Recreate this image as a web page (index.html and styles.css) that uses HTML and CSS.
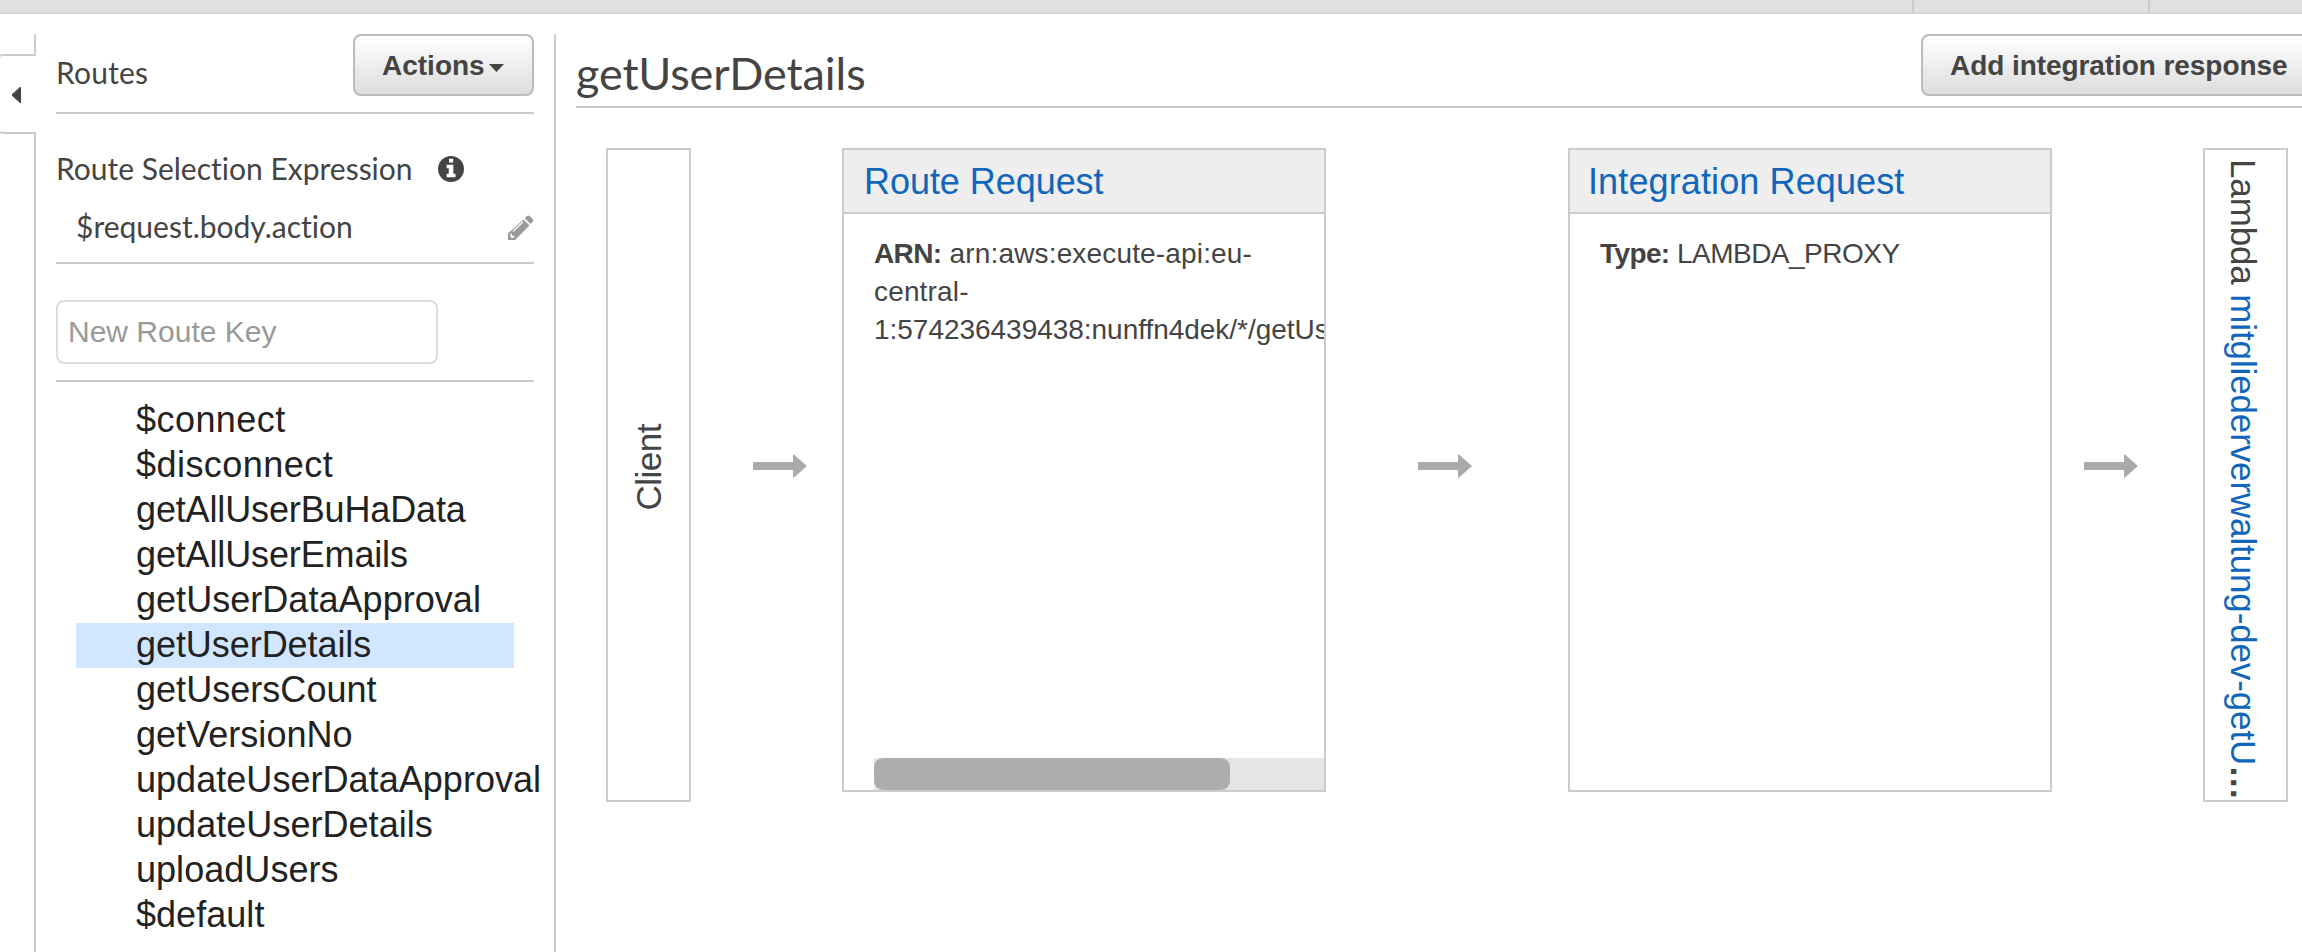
FILE: index.html
```html
<!DOCTYPE html>
<html lang="en">
<head>
<meta charset="utf-8">
<title>getUserDetails</title>
<link rel="stylesheet" href="styles.css">
</head>
<body>
<header class="topbar"><span class="topbar-cell"></span><span class="topbar-cell cell-mid"></span><span class="topbar-cell cell-end"></span></header>
<div class="workspace">
  <div class="rail">
    <div class="rail-top"></div>
    <button class="rail-tab" aria-label="Collapse"><svg width="9" height="16" viewBox="0 0 9 16"><path d="M9 0V16H8L0 8.800V7.200L8 0Z" fill="#444"/></svg></button>
    <div class="rail-rest"></div>
  </div>
  <aside class="sidebar">
    <div class="side-head">
      <span class="side-title">Routes</span>
      <button class="btn btn-actions"><span class="actions-label">Actions</span><svg class="caret" width="15" height="8" viewBox="0 0 15 8"><path d="M0 0H15L7.500 8Z" fill="#444"/></svg></button>
    </div>
    <section class="expression">
      <div class="expr-label"><span class="expr-text">Route Selection Expression</span>
        <svg class="info" width="26" height="26" viewBox="0 0 26 26"><circle cx="13" cy="13" r="13" fill="#444"/><path d="M11 2.800h4.200v3.800H11zM8.600 8.800h6.700v8.900h2.200v3.500H8.600v-3.500h2.200v-5.400H8.600z" fill="#fff"/></svg>
      </div>
      <div class="expr-value"><span class="expr-code">$request.body.action</span>
        <svg class="pencil" width="26" height="26" viewBox="0 0 26 26"><path d="M15.500 4.500 21.500 10.500 7 25H0V18.500Z" fill="#999"/><path d="M16.800 3.200 18.800 1.200Q20.300-.3 21.800 1.200L24.500 3.900Q26 5.500 24.500 7L22.600 9Z" fill="#999"/><path d="M5 16.500 15 6.700" stroke="#fff" stroke-width="1.200" fill="none"/><path d="M2.200 19.500 4 18.200V20.800H6.600L5.400 23H3.600L2.200 21.600Z" fill="#fff"/></svg>
      </div>
    </section>
    <div class="new-route"><div class="route-input"><span class="placeholder">New Route Key</span></div></div>
    <ul class="routes">
      <li class="system">$connect</li>
      <li class="system">$disconnect</li>
      <li class="all-users">getAllUserBuHaData</li>
      <li class="all-users">getAllUserEmails</li>
      <li>getUserDataApproval</li>
      <li class="selected">getUserDetails</li>
      <li>getUsersCount</li>
      <li>getVersionNo</li>
      <li>updateUserDataApproval</li>
      <li>updateUserDetails</li>
      <li>uploadUsers</li>
      <li>$default</li>
    </ul>
  </aside>
  <main class="main">
    <div class="main-head">
      <h1 class="title">getUserDetails</h1>
      <button class="btn btn-add"><span class="add-label">Add integration response</span></button>
    </div>
    <div class="flow">
      <div class="endpoint endpoint-client"><span class="client">Client</span></div>
      <svg class="arrow" width="54" height="24" viewBox="0 0 54 24"><path d="M1 8H40V1.200Q40-.4 41.200.8L54 12 41.200 23.200Q40 24.400 40 22.800V16H1Q0 16 0 15V9Q0 8 1 8Z" fill="#aaa"/></svg>
      <section class="card">
        <h2 class="card-head"><a class="route-link">Route Request</a></h2>
        <div class="card-body"><p class="arn"><b>ARN:</b> arn:aws:execute-api:eu-<br>central-<br><span class="arn-tail">1:574236439438:nunffn4dek/*/getUs</span></p>
          <div class="track"><div class="thumb"></div></div></div>
      </section>
      <svg class="arrow arrow-mid" width="54" height="24" viewBox="0 0 54 24"><path d="M1 8H40V1.200Q40-.4 41.200.8L54 12 41.200 23.200Q40 24.400 40 22.800V16H1Q0 16 0 15V9Q0 8 1 8Z" fill="#aaa"/></svg>
      <section class="card">
        <h2 class="card-head head-int"><a class="int-link">Integration Request</a></h2>
        <div class="card-body"><p class="type"><b>Type:</b> LAMBDA_PROXY</p></div>
      </section>
      <svg class="arrow arrow-end" width="54" height="24" viewBox="0 0 54 24"><path d="M1 8H40V1.200Q40-.4 41.200.8L54 12 41.200 23.200Q40 24.400 40 22.800V16H1Q0 16 0 15V9Q0 8 1 8Z" fill="#aaa"/></svg>
      <div class="endpoint endpoint-fn"><span class="lambda">Lambda <a>mitgliederverwaltung-dev-getU</a><span class="more">…</span></span></div>
    </div>
  </main>
</div>
</body>
</html>
```
FILE: styles.css
```css
* { box-sizing: border-box; }
html, body { height: 100%; overflow: hidden; }
body { margin: 0; background: #fff; color: #444; font-family: "Liberation Sans", Arial, sans-serif; font-size: 28px; }
button { font: inherit; color: inherit; }
svg { display: block; flex: none; }

.topbar { display: flex; height: 14px; background: #e0e0e0; border-bottom: 2px solid #d5d5d5; }
.topbar-cell { width: 1912px; }
.cell-mid { width: 236px; border-left: 2px solid #ccc; }
.cell-end { width: 154px; border-left: 2px solid #ccc; }

.workspace { display: flex; height: 938px; padding-top: 20px; }

.rail { width: 36px; display: flex; flex-direction: column; flex: none; }
.rail-top { height: 20px; border-right: 2px solid #ccc; }
.rail-tab { height: 80px; margin: 0 0 0 -4px; padding: 2px 0 0 14px; background: #fff; border: 2px solid #ccc; border-right: 0; border-radius: 7px 0 0 7px; display: flex; align-items: center; }
.rail-rest { flex: 1; border-right: 2px solid #ccc; }

.sidebar { width: 520px; flex: none; padding: 0 20px; border-right: 2px solid #ccc; font-family: Lato, sans-serif; font-size: 30px; font-variant-ligatures: none; }
.side-head { height: 80px; display: flex; justify-content: space-between; border-bottom: 2px solid #ccc; }
.side-title { padding-top: 21px; line-height: 34px; letter-spacing: .2px; }
.btn { height: 62px; border: 2px solid #bbb; border-radius: 8px; background: linear-gradient(#fff, #ddd); font-family: "Liberation Sans", Arial, sans-serif; font-weight: bold; font-size: 28px; padding: 0; display: flex; align-items: center; }
.btn-actions { width: 181px; padding: 2px 0 0 27px; gap: 4px; }
.caret { margin-top: 3px; }
.expression { height: 150px; border-bottom: 2px solid #ccc; }
.expr-label { display: flex; padding-top: 37px; line-height: 34px; gap: 25px; }
.info { margin-top: 5px; }
.expr-value { display: flex; justify-content: space-between; margin-top: 24px; padding-left: 20px; line-height: 34px; }
.pencil { margin-top: 6px; }
.new-route { height: 118px; padding-top: 36px; border-bottom: 2px solid #ccc; }
.route-input { width: 382px; height: 64px; border: 2px solid #ddd; border-radius: 8px; padding-left: 10px; font: 30px/60px "Liberation Sans", Arial, sans-serif; color: #999; }
.routes { list-style: none; margin: 16px 20px 0; padding: 0; font: 36px/43px "Liberation Sans", Arial, sans-serif; color: #222; letter-spacing: .04px; }
.routes li { height: 45px; padding-left: 60px; white-space: nowrap; }
.routes .system { letter-spacing: .45px; }
.routes .all-users { letter-spacing: -.14px; }
.routes .selected { background: #d1e7ff; letter-spacing: -.06px; }

.main { flex: 1; min-width: 0; padding-left: 20px; }
.main-head { display: flex; height: 74px; border-bottom: 2px solid #ccc; justify-content: space-between; }
.title { margin: 0; font: 45px/54px Lato, sans-serif; padding-top: 12px; letter-spacing: -.08px; }
.btn-add { width: 400px; margin-right: -19px; padding: 2px 0 0 27px; white-space: nowrap; flex: none; }
.add-label { letter-spacing: -.07px; }

.flow { display: flex; padding: 40px 0 0 30px; }
.endpoint { width: 85px; height: 654px; border: 2px solid #ccc; flex: none; display: flex; justify-content: center; align-items: center; overflow: hidden; }
.endpoint-client { padding-bottom: 16px; }
.endpoint-fn { margin-left: 65px; align-items: flex-start; padding: 9px 5px 0 0; }
.client { writing-mode: vertical-rl; transform: rotate(180deg); font-size: 35px; letter-spacing: -.5px; }
.lambda { writing-mode: vertical-rl; font-size: 35px; letter-spacing: -.13px; white-space: nowrap; }
.more { font-weight: bold; letter-spacing: 0; }
.arrow { margin: 306px 35px 0 62px; }
.arrow-mid { margin: 306px 96px 0 92px; }
.arrow-end { margin: 306px 0 0 32px; }
.card { width: 484px; height: 644px; border: 2px solid #ccc; flex: none; display: flex; flex-direction: column; overflow: hidden; }
.card-head { margin: 0; height: 64px; background: #eee; border-bottom: 2px solid #ccc; padding-left: 20px; font-size: 36px; line-height: 63px; font-weight: normal; letter-spacing: -.05px; }
.head-int { padding-left: 18px; letter-spacing: .12px; }
a { color: #1166bb; }
.card-body { flex: 1; padding: 21px 0 0 30px; display: flex; flex-direction: column; justify-content: space-between; }
.card-body p { margin: 0; line-height: 38px; white-space: nowrap; }
.card-body b { letter-spacing: -.6px; }
.arn { letter-spacing: .16px; }
.arn-tail { letter-spacing: -.03px; }
.type { letter-spacing: -.5px; }
.track { height: 32px; background: #e5e5e5; }
.thumb { width: 356px; height: 32px; background: #adadad; border-radius: 9px; }
```
